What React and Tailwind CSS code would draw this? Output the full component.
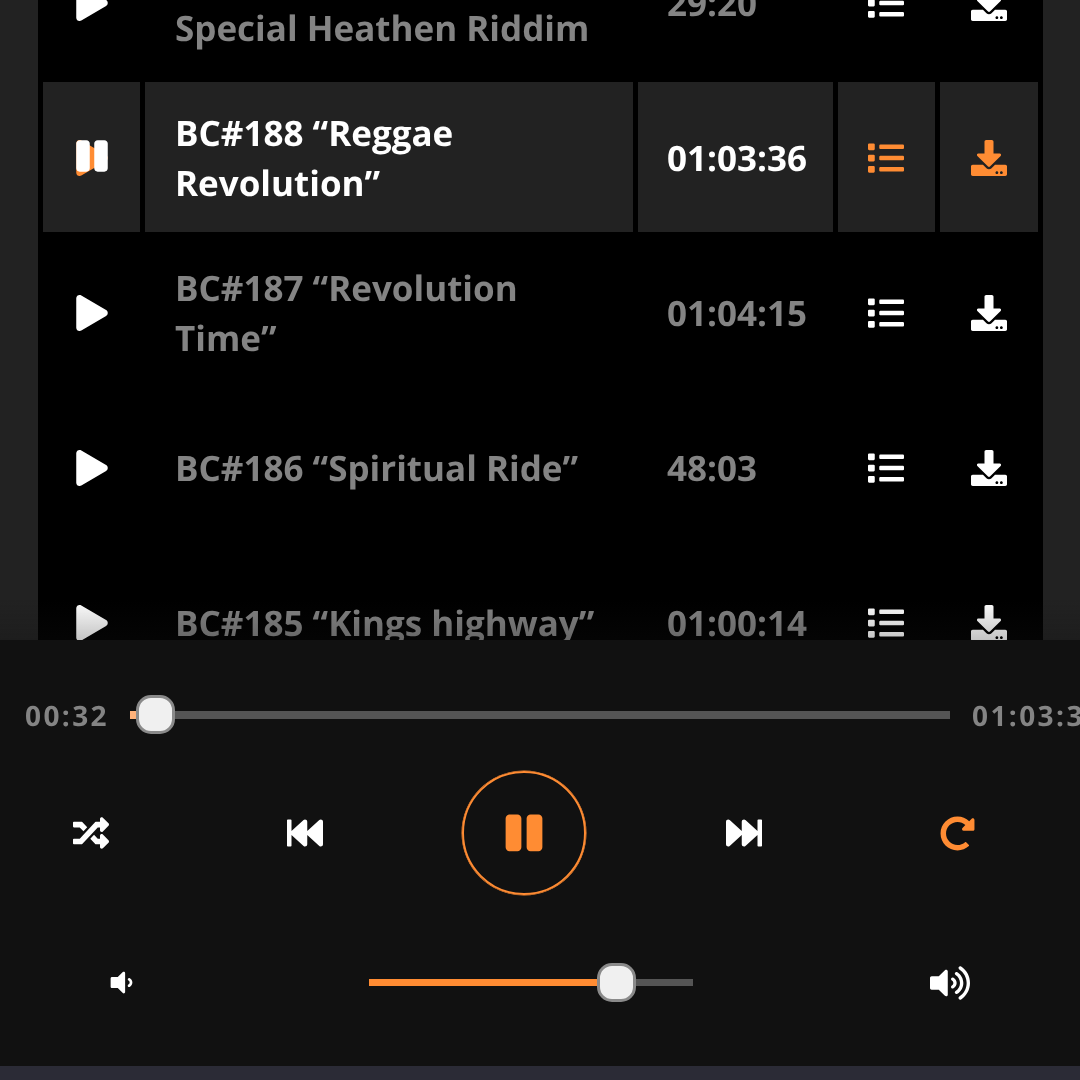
import React from "react";
import { FaPlay, FaPause, FaList, FaDownload, FaRandom, FaFastBackward, FaFastForward, FaRedoAlt, FaVolumeDown, FaVolumeUp } from "react-icons/fa";

const tracks = [
  { title: <>BC#189<br />Special Heathen Riddim</>, time: "29:20" },
  { title: "BC#188 “Reggae Revolution”", time: "01:03:36", active: true },
  { title: "BC#187 “Revolution Time”", time: "01:04:15" },
  { title: "BC#186 “Spiritual Ride”", time: "48:03" },
  { title: "BC#185 “Kings highway”", time: "01:00:14" },
];

function Row({ t }) {
  const cell = t.active ? "bg-[#222222]" : "";
  const icon = t.active ? "text-[#ff8c33]" : "text-white";
  return (
    <>
      <div className={`flex items-center justify-center pt-[1px] ${cell}`}>
        <span className="relative block w-[36px] h-[36px]">
          <FaPlay className={`text-[36px] ${icon}`} />
          {t.active && <FaPause className="absolute left-0 -top-[2px] text-[36px] text-white" />}
        </span>
      </div>
      <div className={`flex items-center pl-[30px] pr-[30px] pt-[4px] text-[35px] leading-[50px] font-bold ${t.active ? "text-white" : "text-[#848484]"} ${cell}`}>
        <div className="will-change-transform">{t.title}</div>
      </div>
      <div className={`flex items-center pl-[29px] pt-[5px] text-[35px] font-bold ${t.active ? "text-white" : "text-[#848484]"} ${cell}`}>
        <div className="will-change-transform">{t.time}</div>
      </div>
      <div className={`flex items-center justify-center pr-[2px] pt-[1px] ${cell}`}>
        <FaList className={`text-[36px] ${icon}`} />
      </div>
      <div className={`flex items-center justify-center pt-[1px] ${cell}`}>
        <FaDownload className={`text-[36px] ${icon}`} />
      </div>
    </>
  );
}

function Thumb() {
  return <div className="w-[39px] h-[39px] shrink-0 rounded-[15px] border-[3px] border-[#8a8a8a] bg-[#f0f0f0]" />;
}

export default function App() {
  return (
    <div className="w-[1080px] h-[1080px] overflow-hidden flex flex-col bg-[#222222] font-['Open_Sans',sans-serif] [text-rendering:geometricPrecision]">
      <div className="relative h-[640px] shrink-0 overflow-hidden">
        <div className="mx-[38px] w-[1005px] h-full bg-black px-[5px] overflow-hidden">
          <div className="-mt-[73px] grid grid-cols-[97px_488px_195px_97px_98px] auto-rows-[150px] gap-[5px]">
            {tracks.map((t, i) => <Row key={i} t={t} />)}
          </div>
        </div>
        <div className="absolute left-0 right-0 bottom-0 h-[40px] bg-gradient-to-b from-transparent to-[#111111]/25" />
      </div>

      <div className="h-[426px] shrink-0 bg-[#111111] flex flex-col pt-[55px]">
        <div className="flex items-center h-[39px] whitespace-nowrap text-[28px] font-bold tracking-[2.4px] text-[#848484]">
          <span className="ml-[25px] w-[105px] shrink-0 pt-[2px] will-change-transform">00:32</span>
          <div className="relative w-[820px] h-[8px] bg-[#555555] shrink-0">
            <div className="absolute left-0 top-0 h-full w-[8px] bg-[#ffb27a]" />
            <div className="absolute left-[6px] -top-[16px]"><Thumb /></div>
          </div>
          <span className="ml-[22px] shrink-0 pt-[2px] will-change-transform">01:03:36</span>
        </div>

        <div className="mt-[37px] flex items-center h-[124px] pl-[73px] text-white">
          <FaRandom className="text-[36px] shrink-0" />
          <FaFastBackward className="text-[36px] shrink-0 ml-[178px]" />
          <div className="ml-[139px] w-[124px] h-[124px] shrink-0 rounded-full border-2 border-[#ff8c33] ring-[0.5px] ring-[#ff8c33] flex items-center justify-center text-[#ff8c33]">
            <FaPause className="text-[42px]" />
          </div>
          <FaFastForward className="text-[36px] shrink-0 ml-[140px]" />
          <FaRedoAlt className="text-[35px] shrink-0 ml-[178px] text-[#ff8c33]" />
        </div>

        <div className="mt-[68px] flex items-center h-[39px] text-white">
          <FaVolumeDown className="text-[29px] shrink-0 ml-[107px]" />
          <div className="relative ml-[233px] w-[324px] h-[7px] bg-[#555555] shrink-0">
            <div className="absolute left-0 top-0 h-full w-[235px] bg-[#ff8c33]" />
            <div className="absolute left-[228px] -top-[16px]"><Thumb /></div>
          </div>
          <FaVolumeUp className="text-[36px] shrink-0 ml-[237px] w-[40px] h-[36px]" />
        </div>
      </div>

      <div className="h-[14px] shrink-0 bg-[#2b2b36]" />
    </div>
  );
}
